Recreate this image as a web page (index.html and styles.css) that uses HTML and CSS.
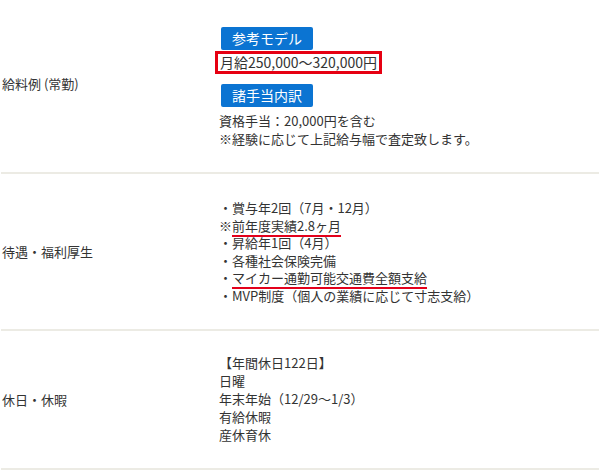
FILE: index.html
```html
<!DOCTYPE html>
<html lang="ja">
<head>
<meta charset="utf-8">
<link rel="stylesheet" href="styles.css">
</head>
<body>
<div class="table">
  <div class="row row-first">
    <div class="label">給料例 (常勤)</div>
    <div class="value">
      <div class="badge">参考モデル</div>
      <div class="redbox">月給250,000～320,000円</div>
      <div class="badge badge-2">諸手当内訳</div>
      <div class="lines">
        <div>資格手当：20,000円を含む</div>
        <div>※経験に応じて上記給与幅で査定致します。</div>
      </div>
    </div>
  </div>
  <div class="row">
    <div class="label">待遇・福利厚生</div>
    <div class="value lines lines-2">
      <div>・賞与年2回（7月・12月）</div>
      <div>※<span class="ul">前年度実績2.8ヶ月</span></div>
      <div>・昇給年1回（4月）</div>
      <div>・各種社会保険完備</div>
      <div>・<span class="ul">マイカー通勤可能交通費全額支給</span></div>
      <div>・MVP制度（個人の業績に応じて寸志支給）</div>
    </div>
  </div>
  <div class="row row-last">
    <div class="label">休日・休暇</div>
    <div class="value lines lines-3">
      <div>【年間休日122日】</div>
      <div>日曜</div>
      <div>年末年始（12/29～1/3）</div>
      <div>有給休暇</div>
      <div>産休育休</div>
    </div>
  </div>
</div>
</body>
</html>
```

FILE: styles.css
```css
html, body {
  margin: 0;
  padding: 0;
  background: #ffffff;
}
body {
  font-family: "Noto Sans CJK JP", "Noto Sans", sans-serif;
  font-size: 13px;
  color: #333333;
}
.table {
  padding: 0 1px;
}
.row {
  display: grid;
  grid-template-columns: 218px 1fr;
  align-items: center;
  border-bottom: 2px solid #ecebe4;
  padding: 25px 0;
}
.row-first {
  padding: 27px 0 25px;
}
.row-first .label {
  margin-top: -8px;
}
.row-last {
  padding: 23px 0 24px;
}
.label {
  padding-left: 1px;
}
.value {
  display: flex;
  flex-direction: column;
  align-items: flex-start;
}
.badge {
  background: #0b74d2;
  color: #ffffff;
  font-size: 14px;
  line-height: 23px;
  height: 23px;
  width: 92px;
  text-align: center;
  border-radius: 2px;
  margin-left: 2px;
}
.badge-2 {
  margin-top: 10px;
}
.redbox {
  margin-top: 1px;
  margin-left: -4px;
  border: 3px solid #e60012;
  font-size: 14px;
  line-height: 17px;
  padding: 0 2px;
}
.lines {
  line-height: 17.5px;
  margin-top: 5px;
}
.lines-2, .lines-3 {
  margin-top: 0;
}
.lines-3 {
  line-height: 18px;
}
.ul {
  border-bottom: 2px solid #e3001b;
  padding-bottom: 0;
}
```
